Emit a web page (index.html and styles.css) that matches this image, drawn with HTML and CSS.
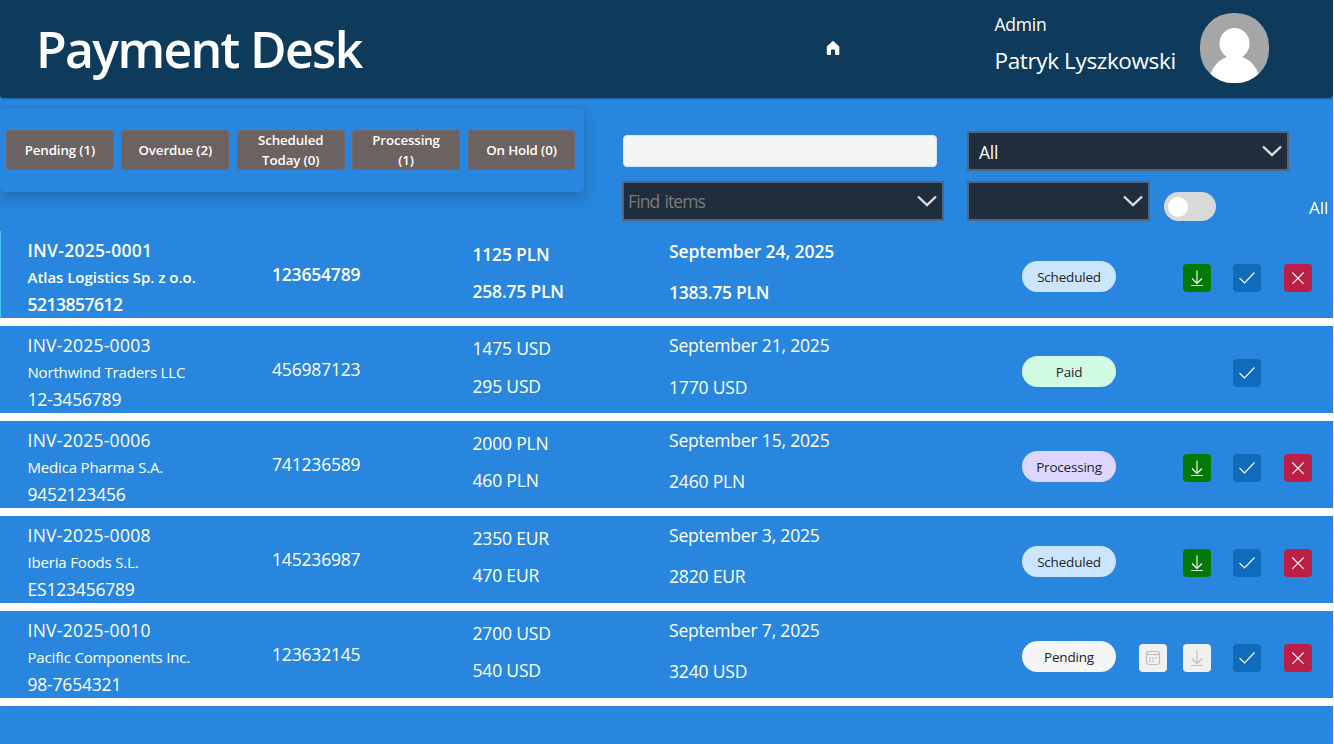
FILE: index.html
```html
<!DOCTYPE html>
<html lang="en">
<head>
<meta charset="utf-8">
<title>Payment Desk</title>
<link rel="stylesheet" href="styles.css">
</head>
<body>
<svg class="defs" width="0" height="0">
  <symbol id="download" viewBox="0 0 28 28"><path d="M14 6.500v12.500M9 14.500l5 5 5-5M8.200 21.500h11.600"/></symbol>
  <symbol id="check" viewBox="0 0 28 28"><path d="M6.500 14l5 5L21.500 8.500"/></symbol>
  <symbol id="cross" viewBox="0 0 28 28"><path d="M8.300 8.500l11.400 11.400M19.700 8.500L8.300 19.900"/></symbol>
  <symbol id="calendar" viewBox="0 0 28 28"><rect x="7.500" y="7.500" width="13" height="13" rx="2.500"/><path d="M7.500 10.500h13"/><path d="M13 14.200h1.600M16.500 14.200h1.600M10 17.200h1.600M13 17.200h1.600M10 14.200h1.600" stroke-width="1.600"/></symbol>
  <symbol id="chevron" viewBox="0 0 20 12"><path d="M1 1.500l9 8.500 9-8.500"/></symbol>
</svg>
<div class="app">
  <header class="header">
    <h1 class="title">Payment Desk</h1>
    <svg class="home" viewBox="0 0 14 16"><path d="M7 .8 13.300 6.500V14q0 1-1 1H9.700q-.6 0-.6-.7V10.500q0-1-1-1H6q-1 0-1 1v3.800q0 .7-.7.700H1.800q-1 0-1-1V6.500Z"/></svg>
    <div class="user"><div class="role">Admin</div><div class="name">Patryk Lyszkowski</div></div>
    <svg class="avatar" viewBox="0 0 69 70">
      <clipPath id="round"><rect width="69" height="70" rx="33"/></clipPath>
      <g clip-path="url(#round)"><rect width="69" height="70" fill="#a6a6a6"/><ellipse cx="34.500" cy="30.500" rx="15" ry="15.500" fill="#fff"/><path d="M8 70Q12 49 27 44h15Q57 49 61 70Z" fill="#fff"/></g>
    </svg>
  </header>
  <section class="toolbar">
    <nav class="tabs">
      <button class="tab">Pending (1)</button><button class="tab">Overdue (2)</button><button class="tab">Scheduled Today (0)</button><button class="tab">Processing (1)</button><button class="tab">On Hold (0)</button>
    </nav>
    <div class="filters">
      <div class="search"></div>
      <div class="combo status"><span>All</span><svg><use href="#chevron"/></svg></div>
      <div class="combo find"><span>Find items</span><svg><use href="#chevron"/></svg></div>
      <div class="pair">
        <div class="combo small"><span></span><svg><use href="#chevron"/></svg></div>
        <div class="toggle"><i></i></div>
        <span class="all">All</span>
      </div>
    </div>
  </section>
  <main class="list">
    <article class="row selected">
      <div class="vendor"><span class="number">INV-2025-0001</span><span class="company">Atlas Logistics Sp. z o.o.</span><span>5213857612</span></div>
      <div class="account">123654789</div>
      <div class="amount"><span>1125 PLN</span><span>258.75 PLN</span></div>
      <div class="due"><span>September 24, 2025</span><span>1383.75 PLN</span></div>
      <div class="pill scheduled">Scheduled</div>
      <div></div><svg class="act green"><use href="#download"/></svg><svg class="act blue"><use href="#check"/></svg><svg class="act red"><use href="#cross"/></svg>
    </article>
    <article class="row wide">
      <div class="vendor"><span class="number">INV-2025-0003</span><span class="company">Northwind Traders LLC</span><span>12-3456789</span></div>
      <div class="account">456987123</div>
      <div class="amount"><span>1475 USD</span><span>295 USD</span></div>
      <div class="due"><span>September 21, 2025</span><span>1770 USD</span></div>
      <div class="pill paid">Paid</div>
      <div></div><div></div><svg class="act blue"><use href="#check"/></svg><div></div>
    </article>
    <article class="row">
      <div class="vendor"><span class="number">INV-2025-0006</span><span class="company">Medica Pharma S.A.</span><span>9452123456</span></div>
      <div class="account">741236589</div>
      <div class="amount"><span>2000 PLN</span><span>460 PLN</span></div>
      <div class="due"><span>September 15, 2025</span><span>2460 PLN</span></div>
      <div class="pill processing">Processing</div>
      <div></div><svg class="act green"><use href="#download"/></svg><svg class="act blue"><use href="#check"/></svg><svg class="act red"><use href="#cross"/></svg>
    </article>
    <article class="row">
      <div class="vendor"><span class="number">INV-2025-0008</span><span class="company">Iberia Foods S.L.</span><span>ES123456789</span></div>
      <div class="account">145236987</div>
      <div class="amount"><span>2350 EUR</span><span>470 EUR</span></div>
      <div class="due"><span>September 3, 2025</span><span>2820 EUR</span></div>
      <div class="pill scheduled">Scheduled</div>
      <div></div><svg class="act green"><use href="#download"/></svg><svg class="act blue"><use href="#check"/></svg><svg class="act red"><use href="#cross"/></svg>
    </article>
    <article class="row">
      <div class="vendor"><span class="number">INV-2025-0010</span><span class="company">Pacific Components Inc.</span><span>98-7654321</span></div>
      <div class="account">123632145</div>
      <div class="amount"><span>2700 USD</span><span>540 USD</span></div>
      <div class="due"><span>September 7, 2025</span><span>3240 USD</span></div>
      <div class="pill pending">Pending</div>
      <svg class="act off"><use href="#calendar"/></svg><svg class="act off"><use href="#download"/></svg><svg class="act blue"><use href="#check"/></svg><svg class="act red"><use href="#cross"/></svg>
    </article>
    <div class="rest"></div>
  </main>
</div>
</body>
</html>
```
FILE: styles.css
```css
* { box-sizing: border-box; }
body { margin: 0; background: #f3f6fa; font-family: "Open Sans", "Noto Sans", sans-serif; color: #fff; overflow: hidden; }
.defs { position: absolute; }
.app { width: 1333px; height: 744px; background: #2886de; display: flex; flex-direction: column; overflow: hidden; }

.header { height: 98px; flex: none; background: #0e3a5c; display: flex; align-items: flex-start; border-radius: 0 0 4px 4px; box-shadow: 0 1px 2px rgba(0,0,0,.3); padding-left: 36px; }
.title { margin: 14px 0 0; width: 790px; font-size: 50px; line-height: 70px; font-weight: 600; letter-spacing: -1.700px; white-space: nowrap; }
.home { width: 14px; height: 16px; margin-top: 40px; fill: #fff; }
.user { margin: 9px 0 0 154.500px; width: 205.500px; white-space: nowrap; }
.role { font-size: 17.500px; line-height: 31px; letter-spacing: -0.200px; }
.name { font-size: 22.500px; line-height: 42px; letter-spacing: -0.370px; }
.avatar { width: 69px; height: 70px; margin-top: 13px; }

.toolbar { height: 133px; flex: none; display: flex; align-items: flex-start; }
.tabs { width: 584px; flex: none; height: 84px; margin-top: 10px; padding: 22px 6px 0; display: flex; gap: 7.600px; border-radius: 4px; box-shadow: 0 6px 14px rgba(0,0,0,.18), 0 0 2px rgba(0,0,0,.12); }
.tab { width: 107.800px; height: 40px; padding: 0 12px; border: 0; box-shadow: inset 0 0 0 1px #72686a; border-radius: 4px; background: #6b6261; color: #fff; font: 600 13.300px/20px "Open Sans", sans-serif; letter-spacing: -0.120px; }
.filters { margin: 33px 0 0 38px; display: grid; grid-template-columns: 345px 366px; grid-template-rows: 50px 40px; }
.search { width: 314px; height: 32px; margin: 4px 0 0 1px; background: #f4f4f4; border: 1px solid #dbe9f6; border-radius: 4px; }
.combo { height: 40px; background: #1f2d3d; border: 2px solid #4d6781; display: flex; align-items: center; justify-content: space-between; padding: 2px 5px 0 10px; font-size: 17.500px; letter-spacing: -0.200px; }
.combo svg { width: 20px; height: 12px; margin-top: -3px; fill: none; stroke: #ddd; stroke-width: 2.400; }
.status { width: 322px; }
.find { width: 322px; padding: 0 5px 0 4px; color: #7c7c7c; letter-spacing: -0.900px; word-spacing: 1.500px; }
.find svg { margin-top: -1px; }
.pair { display: flex; }
.small { width: 183px; }
.toggle { width: 52px; height: 29px; margin: 11px 0 0 14px; padding: 4.500px 4px; border-radius: 15px; background: #d9d9d9; }
.toggle i { display: block; width: 20px; height: 20px; border-radius: 50%; background: #fff; }
.all { margin: 13px 0 0 93px; font-size: 17px; line-height: 28px; }

.list { display: flex; flex-direction: column; gap: 8px; background: #fff; flex: 1; }
.row { height: 87px; flex: none; background: #2886de; display: grid; grid-template-columns: 244.500px 200.500px 196.500px 353px 117px 44px 50px 51px 28px; padding-left: 27.500px; font-size: 17.500px; letter-spacing: -0.180px; white-space: nowrap; }
.selected { font-weight: 600; box-shadow: inset 1px 0 #45c9f0; letter-spacing: -0.200px; }
.vendor { display: flex; flex-direction: column; padding-top: 6px; line-height: 27.200px; letter-spacing: -0.200px; }
.number { letter-spacing: 0.260px; }
.selected .number { letter-spacing: 0.280px; }
.company { font-size: 15px; letter-spacing: -0.170px; }
.selected .company { letter-spacing: -0.030px; }
.selected .vendor { letter-spacing: -0.500px; }
.account { padding-top: 29px; line-height: 28px; }
.amount { display: flex; flex-direction: column; padding-top: 4px; line-height: 37.300px; }
.selected .amount { padding-top: 5px; }
.wide .amount { line-height: 37.700px; }
.due { display: flex; flex-direction: column; line-height: 41px; margin-top: -1px; letter-spacing: -0.180px; }
.wide .due span + span { padding-top: 1px; }
.selected .due { margin-top: 0; letter-spacing: -0.080px; }
.selected .due span + span { letter-spacing: -0.300px; }
.pill { width: 94px; height: 31px; margin-top: 30px; border-radius: 16px; color: #242424; font-size: 13.500px; font-weight: 400; line-height: 32px; text-align: center; letter-spacing: -0.200px; }
.scheduled { background: #cce5ff; }
.paid { background: #d1fae5; }
.processing { background: #ddd6fe; }
.pending { background: #f5f5f5; }
.act { width: 28px; height: 28px; margin-top: 33px; border-radius: 4px; fill: none; stroke: #fff; stroke-width: 1.100; }
.green { background: #047a04; }
.blue { background: #0f6cbd; }
.red { background: #bc1f45; }
.off { background: #f0f0f0; stroke: #bdbdbd; }
.rest { flex: 1; background: #2886de; }
```
